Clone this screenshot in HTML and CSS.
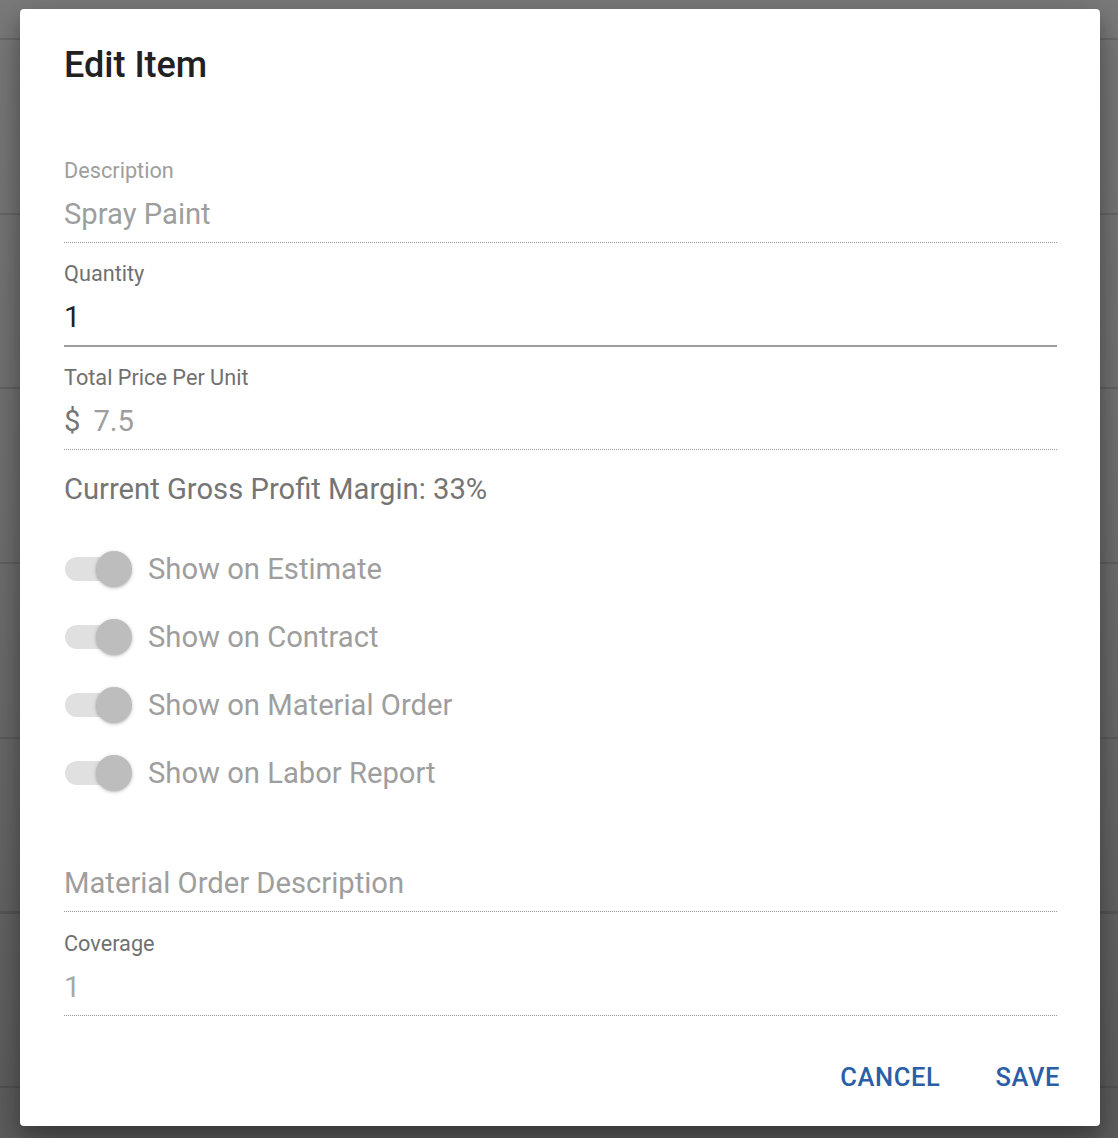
FILE: index.html
```html
<!DOCTYPE html>
<html lang="en">
<head>
<meta charset="utf-8">
<title>Edit Item</title>
<link rel="stylesheet" href="styles.css">
</head>
<body>
<div class="overlay">
  <div class="dialog">
    <h1 class="title">Edit Item</h1>
    <div class="content">
      <div class="field disabled">
        <div class="label">Description</div>
        <div class="value">Spray Paint</div>
      </div>
      <div class="field active">
        <div class="label">Quantity</div>
        <div class="value">1</div>
      </div>
      <div class="field disabled">
        <div class="label dark">Total Price Per Unit</div>
        <div class="value"><span class="currency">$</span>7.5</div>
      </div>
      <div class="margin">Current Gross Profit Margin: 33%</div>
      <div class="toggles">
        <div class="toggle-row"><span class="switch"><span class="track"></span><span class="thumb"></span></span><span class="toggle-label">Show on Estimate</span></div>
        <div class="toggle-row"><span class="switch"><span class="track"></span><span class="thumb"></span></span><span class="toggle-label">Show on Contract</span></div>
        <div class="toggle-row"><span class="switch"><span class="track"></span><span class="thumb"></span></span><span class="toggle-label">Show on Material Order</span></div>
        <div class="toggle-row"><span class="switch"><span class="track"></span><span class="thumb"></span></span><span class="toggle-label">Show on Labor Report</span></div>
      </div>
      <div class="field disabled">
        <div class="label"></div>
        <div class="value">Material Order Description</div>
      </div>
      <div class="field disabled coverage">
        <div class="label dark">Coverage</div>
        <div class="value light">1</div>
      </div>
    </div>
    <div class="actions">
      <button class="btn">Cancel</button>
      <button class="btn">Save</button>
    </div>
  </div>
</div>
</body>
</html>
```

FILE: styles.css
```css
html, body {
  margin: 0;
  padding: 0;
}
body {
  font-family: Roboto, "Liberation Sans", Arial, sans-serif;
  width: 1118px;
  height: 1138px;
  overflow: hidden;
  background-color: #6c6c6c;
  background-image:
    repeating-linear-gradient(to bottom, transparent 0, transparent 38px, rgba(0,0,0,0.12) 38px, rgba(0,0,0,0.12) 40px, transparent 40px, transparent 174.7px),
    linear-gradient(to bottom, #7a7a7a 0%, #6e6e6e 50%, #5c5c5c 100%);
}
.overlay {
  display: flex;
  align-items: flex-start;
  padding: 9px 18px 0 20px;
}
.dialog {
  width: 1080px;
  background: #fff;
  border-radius: 4px;
  box-shadow: 0 14px 45px rgba(0,0,0,0.25), 0 10px 18px rgba(0,0,0,0.22);
}
.title {
  margin: 0;
  padding: 36px 44px 0 44px;
  font-size: 36px;
  line-height: 40px;
  font-weight: 500;
  color: #212121;
  height: 95px;
  box-sizing: content-box;
}
.content {
  padding: 0 43px 0 44px;
}
.field {
  padding-top: 18px;
  border-bottom: 1px dotted #9a9a9a;
}
.field.active {
  border-bottom: 2px solid #9e9e9e;
}
.field.coverage {
  padding-top: 19px;
}
.label {
  height: 26px;
  font-size: 21.7px;
  line-height: 26px;
  color: #9e9e9e;
}
.active .label, .label.dark {
  color: #707070;
}
.value {
  margin-top: 10px;
  margin-bottom: 8px;
  height: 40px;
  font-size: 29.2px;
  line-height: 40px;
  color: #9e9e9e;
}
.active .value {
  color: #212121;
}
.value.light {
  color: #a8a8a8;
}
.currency {
  color: #757575;
  margin-right: 13px;
}
.margin {
  margin-top: 21px;
  font-size: 29.2px;
  line-height: 36px;
  color: #757575;
}
.toggles {
  margin-top: 28px;
  margin-bottom: 2px;
}
.toggle-row {
  height: 68px;
  display: flex;
  align-items: center;
}
.switch {
  position: relative;
  width: 68px;
  height: 36px;
  margin-right: 16px;
  flex: none;
}
.track {
  position: absolute;
  left: 1px;
  top: 6px;
  width: 62px;
  height: 24px;
  border-radius: 12px;
  background: #e0e0e0;
}
.thumb {
  position: absolute;
  left: 32px;
  top: 0;
  width: 36px;
  height: 36px;
  border-radius: 50%;
  background: #bdbdbd;
  box-shadow: 0 1px 4px rgba(0,0,0,0.18), 0 1px 2px rgba(0,0,0,0.12);
}
.toggle-label {
  font-size: 29.2px;
  line-height: 36px;
  color: #9e9e9e;
}
.actions {
  display: flex;
  justify-content: flex-end;
  gap: 55px;
  padding: 37px 40px 25px 0;
}
.btn {
  border: 0;
  background: none;
  padding: 0;
  margin: 0;
  font-family: Roboto, "Liberation Sans", Arial, sans-serif;
  font-size: 25.5px;
  line-height: 48px;
  font-weight: 500;
  text-transform: uppercase;
  letter-spacing: 0.6px;
  color: #2a5ea7;
  cursor: pointer;
}
```
